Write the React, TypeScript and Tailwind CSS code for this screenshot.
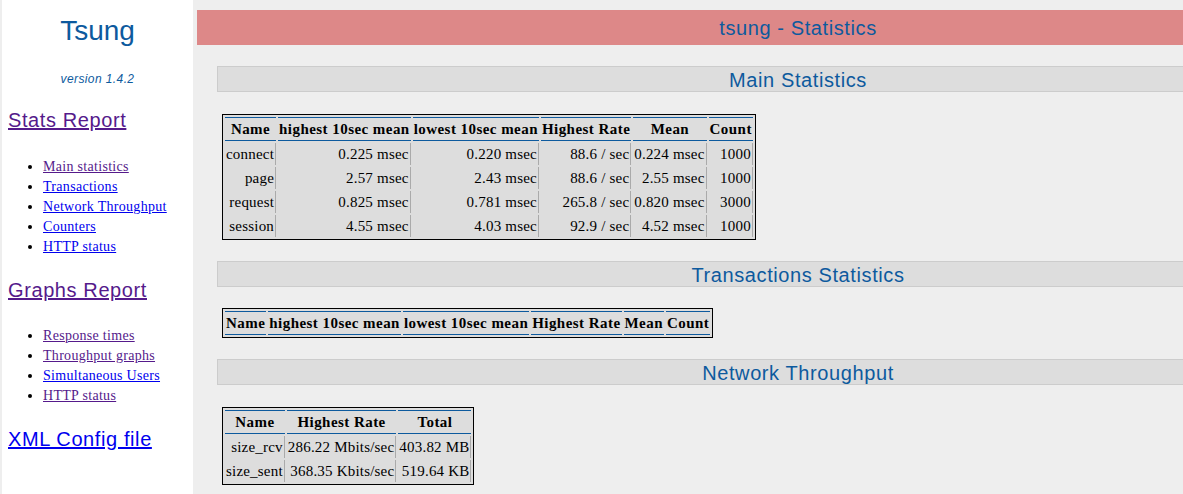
import React from 'react';

type Row = string[];

const blue = 'text-[#0d5a9e]';

const SectionTitle = ({ title }: { title: string }) => (
  <div
    className={`h-[26px] border border-[#cccccc] bg-[#dddddd] text-center text-[20px] leading-[26px] tracking-[0.6px] ${blue}`}
  >
    {title}
  </div>
);

const StatsTable = ({ head, rows }: { head: string[]; rows: Row[] }) => (
  <table className="ml-[5px] border border-black bg-[#dddddd] border-separate border-spacing-[2px] font-['Liberation_Serif',serif] text-[15px] leading-[18px] text-black">
    <thead>
      <tr>
        {head.map((h) => (
          <th
            key={h}
            className="border-t border-b border-[#0d5a9e] px-[1px] py-[2px] text-center font-bold tracking-[0.45px]"
          >
            {h}
          </th>
        ))}
      </tr>
    </thead>
    <tbody>
      {rows.map((r) => (
        <tr key={r[0]}>
          {r.map((c, i) => (
            <td
              key={i}
              className="border-r border-[#aaaaaa] px-[1px] py-[2px] text-right tracking-[0.2px]"
            >
              {c}
            </td>
          ))}
        </tr>
      ))}
    </tbody>
  </table>
);

const visited = 'text-[#551a8b] underline';
const link = 'text-[#0000ee] underline';

const SideList = ({ items, gap }: { items: [string, boolean][]; gap: string }) => (
  <ul className={`${gap} list-disc pl-[35px] font-['Liberation_Serif',serif] text-[14px] leading-[20px] tracking-[0.3px]`}>
    {items.map(([label, seen]) => (
      <li key={label}>
        <a href="#" className={seen ? visited : link}>
          {label}
        </a>
      </li>
    ))}
  </ul>
);

export default function App() {
  const mainHead = ['Name', 'highest 10sec mean', 'lowest 10sec mean', 'Highest Rate', 'Mean', 'Count'];
  const mainRows: Row[] = [
    ['connect', '0.225 msec', '0.220 msec', '88.6 / sec', '0.224 msec', '1000'],
    ['page', '2.57 msec', '2.43 msec', '88.6 / sec', '2.55 msec', '1000'],
    ['request', '0.825 msec', '0.781 msec', '265.8 / sec', '0.820 msec', '3000'],
    ['session', '4.55 msec', '4.03 msec', '92.9 / sec', '4.52 msec', '1000'],
  ];
  const netRows: Row[] = [
    ['size_rcv', '286.22 Mbits/sec', '403.82 MB'],
    ['size_sent', '368.35 Kbits/sec', '519.64 KB'],
  ];

  return (
    <div className="flex min-h-screen w-full overflow-hidden bg-[#eeeeee] font-['Liberation_Sans',Arial,sans-serif]">
      {/* sidebar */}
      <div className="ml-[2px] w-[191px] shrink-0 bg-white px-[6px]">
        <div className={`mt-[14px] text-center text-[28px] leading-[34px] ${blue}`}>Tsung</div>
        <div className={`mt-[23px] text-center text-[12px] italic leading-[16px] tracking-[0.4px] ${blue}`}>
          version 1.4.2
        </div>
        <div className="mt-[21px] text-[20px] leading-[24px] tracking-[0.6px]">
          <a href="#" className={visited}>
            Stats Report
          </a>
        </div>
        <SideList
          gap="mt-[25px]"
          items={[
            ['Main statistics', true],
            ['Transactions', false],
            ['Network Throughput', false],
            ['Counters', false],
            ['HTTP status', false],
          ]}
        />
        <div className="mt-[21px] text-[20px] leading-[24px] tracking-[0.6px]">
          <a href="#" className={visited}>
            Graphs Report
          </a>
        </div>
        <SideList
          gap="mt-[24px]"
          items={[
            ['Response times', true],
            ['Throughput graphs', true],
            ['Simultaneous Users', false],
            ['HTTP status', true],
          ]}
        />
        <div className="mt-[21px] text-[20px] leading-[24px] tracking-[0.6px]">
          <a href="#" className={link}>
            XML Config file
          </a>
        </div>
      </div>

      {/* main */}
      <div className="ml-[4px] w-[1202px] shrink-0">
        <div
          className={`mt-[10px] h-[35px] bg-[#dd8888] pt-[1px] text-center text-[20px] leading-[35px] tracking-[0.6px] ${blue}`}
        >
          tsung - Statistics
        </div>
        <div className="px-[20px]">
          <div className="mt-[21px]">
            <SectionTitle title="Main Statistics" />
          </div>
          <div className="mt-[22px]">
            <StatsTable head={mainHead} rows={mainRows} />
          </div>
          <div className="mt-[21px]">
            <SectionTitle title="Transactions Statistics" />
          </div>
          <div className="mt-[21px]">
            <StatsTable head={mainHead} rows={[]} />
          </div>
          <div className="mt-[21px]">
            <SectionTitle title="Network Throughput" />
          </div>
          <div className="mt-[22px]">
            <StatsTable head={['Name', 'Highest Rate', 'Total']} rows={netRows} />
          </div>
        </div>
      </div>
    </div>
  );
}
